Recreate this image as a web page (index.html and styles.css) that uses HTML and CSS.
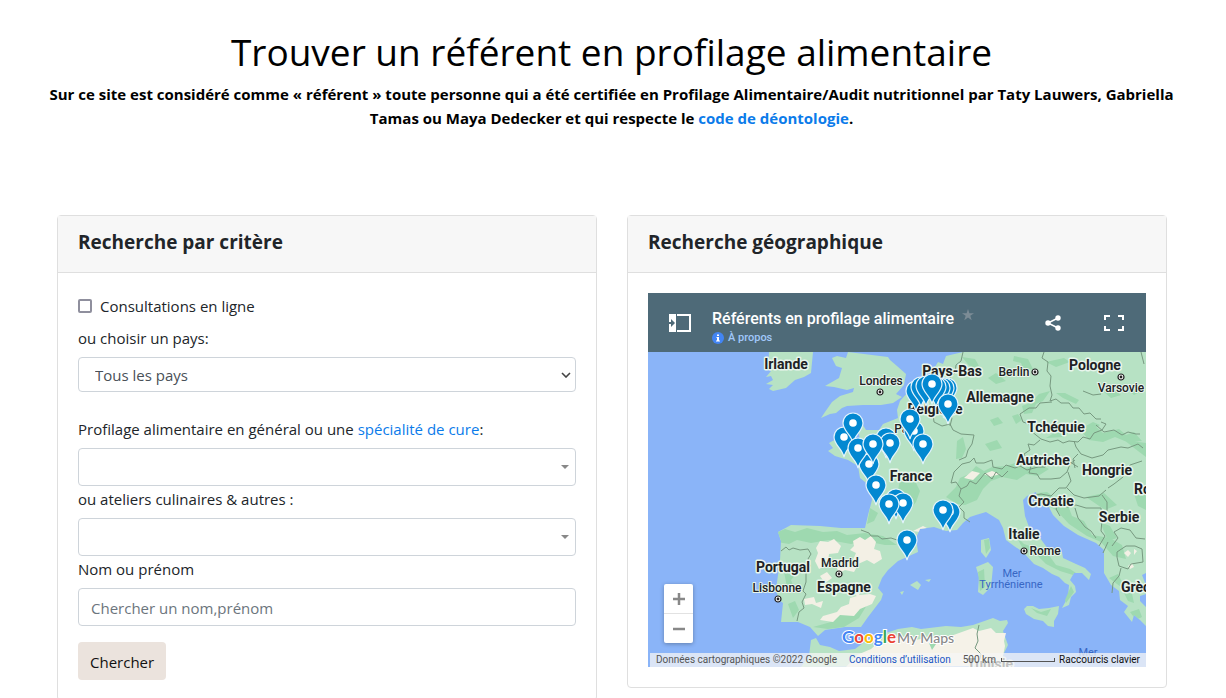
FILE: index.html
```html
<!DOCTYPE html>
<html lang="fr">
<head>
<meta charset="utf-8">
<title>Trouver un référent en profilage alimentaire</title>
<link rel="stylesheet" href="styles.css">
</head>
<body>
<main class="container">
  <header class="intro">
    <h1 class="intro-title">Trouver un référent en profilage alimentaire</h1>
    <p class="intro-text">Sur ce site est considéré comme « référent » toute personne qui a été certifiée en Profilage Alimentaire/Audit nutritionnel par Taty Lauwers, Gabriella Tamas ou Maya Dedecker et qui respecte le <a class="link" href="#">code de déontologie</a>.</p>
  </header>
  <div class="columns">
    <section class="card">
      <h2 class="card-header">Recherche par critère</h2>
      <form class="card-body form">
        <label class="check"><input class="checkbox" type="checkbox">Consultations en ligne</label>
        <label class="label" for="country">ou choisir un pays:</label>
        <div class="select-wrap country">
          <select class="control country-select" id="country"><option>Tous les pays</option></select>
          <svg class="caret" width="10" height="6" viewBox="0 0 10 6"><path d="M1 1l4 4 4-4" fill="none" stroke="#444" stroke-width="1.6"/></svg>
        </div>
        <div class="label"><label for="speciality">Profilage alimentaire en général ou une</label> <a class="link" href="#">spécialité de cure</a>:</div>
        <div class="select-wrap">
          <select class="control" id="speciality"><option></option></select>
          <svg class="caret" width="8" height="4" viewBox="0 0 8 4"><path d="M0 0h8l-4 4z" fill="#888"/></svg>
        </div>
        <label class="label" for="workshop">ou ateliers culinaires &amp; autres :</label>
        <div class="select-wrap">
          <select class="control" id="workshop"><option></option></select>
          <svg class="caret" width="8" height="4" viewBox="0 0 8 4"><path d="M0 0h8l-4 4z" fill="#888"/></svg>
        </div>
        <label class="label" for="name">Nom ou prénom</label>
        <input class="control" id="name" type="text" placeholder="Chercher un nom,prénom">
        <button class="submit" type="button">Chercher</button>
      </form>
    </section>
    <section class="card">
      <h2 class="card-header">Recherche géographique</h2>
      <div class="card-body">
        <div class="map">
          <div class="map-header">
            <button class="map-button" type="button" aria-label="Légende">
              <svg width="22" height="18" viewBox="0 0 22 18"><path d="M0 0h7v18H0z" fill="#fff"/><path d="M8 1h13v16H8" fill="none" stroke="#fff" stroke-width="2"/><path d="M0 8h2V5l4 4-4 4v-3H0z" fill="#4e6a78"/></svg>
            </button>
            <div class="map-heading">
              <div class="map-title-row">
                <h3 class="map-title">Référents en profilage alimentaire</h3>
                <svg width="12" height="12" viewBox="0 0 12 12"><path d="M6 0l1.4 4.2H12L8.300 6.800 9.700 11.300 6 8.500 2.300 11.300 3.700 6.800 0 4.200h4.600z" fill="#7c8c96"/></svg>
              </div>
              <a class="map-about" href="#"><svg width="12" height="12" viewBox="0 0 12 12"><circle cx="6" cy="6" r="6" fill="#4285f4"/><path d="M5 2.500h2v1.500H5zM4.500 5H7v3.500h1v1H4v-1h1V6h-.5z" fill="#fff"/></svg>À propos</a>
            </div>
            <button class="map-button share" type="button" aria-label="Partager">
              <svg width="16" height="16" viewBox="0 0 16 16"><path d="M13 3L3 8l10 5" fill="none" stroke="#fff" stroke-width="1.500"/><g fill="#fff"><circle cx="13" cy="3" r="2.700"/><circle cx="3" cy="8" r="2.700"/><circle cx="13" cy="13" r="2.700"/></g></svg>
            </button>
            <button class="map-button" type="button" aria-label="Plein écran">
              <svg width="20" height="16" viewBox="0 0 20 16"><path d="M1 5V1h5M14 1h5v4M19 11v4h-5M6 15H1v-4" fill="none" stroke="#fff" stroke-width="2"/></svg>
            </button>
          </div>
          <div class="map-canvas">
            <svg class="map-drawing" viewBox="648 352 498 315" role="img" aria-label="Carte des référents en Europe">
              <defs>
                <g id="pin"><path d="M0 20C-2 11-10 8-10 0a10 10 0 0 1 20 0C10 8 2 11 0 20z" fill="#0288d1" stroke="#e4f4fc" stroke-width="1.200"/><circle r="3.800" fill="#fff"/></g>
                <g id="city"><circle r="3" fill="#fff" stroke="#222" stroke-width="1.200"/><circle r="1.400" fill="#222"/></g>
                <clipPath id="land"><path d="M963 352L946 356 943 364 938 362 930 375 918 384 908 392 900 401 897 410 898 418 883 424 879 430 866 430 861 422 855 424 859 434 860 442 848 439 838 438 829 443 833 448 828 451 835 456 848 460 858 466 860 478 870 486 872 500 868 515 865 528 841 528 820 526 791 525 778 532 781 541 780 560 776 590 779 600 783 603 781 622 798 622 810 627 818 636 825 630 845 627 861 627 868 617 881 600 883 594 878 588 882 578 888 570 898 561 918 552 916 538 920 529 934 527 946 531 957 530 963 523 970 517 976 515 986 512 999 520 1003 528 1006 540 1014 546 1023 552 1034 564 1043 568 1052 574 1059 577 1065 583 1069 585 1068 597 1062 608 1069 605 1071 597 1076 592 1075 586 1070 580 1074 573 1082 573 1089 580 1091 574 1085 568 1076 564 1063 558 1062 552 1048 549 1040 538 1029 527 1025 516 1023 500 1027 496 1036 492 1039 503 1045 499 1053 515 1064 526 1078 535 1096 543 1104 550 1104 573 1111 585 1119 591 1120 600 1128 606 1124 612 1132 622 1134 615 1140 620 1146 626V352z"/></clipPath>
              </defs>
              <path d="M648 352h498v315H648z" fill="#8ab4f8"/>
              <g fill="#b7e2c4">
                <path d="M769 352h44l-2 21-7 4-9 3-9 8-13 3-4-2 4-4-7-1 7-4-2-4-5 1 5-6-3-3z"/>
                <path d="M848 352l-2 6-9-2-5 2 4 8 6 2-3 10-14 8 9 1 13 3 7-2-1 4-13 4-8 6-7 10-4 6 9-4 6-1 6-5 5-2 16-1h18l12-2 9-6-6-3 8-9 2-11-9-8-7-6-2-3z"/>
                <g clip-path="url(#land)">
                  <path d="M648 352h498v315H648z"/>
                  <g fill="#9ed9b0">
                    <path d="M778 532l7-3 10 3 12-4 16 4 14-1 10 4 18-2 18 3 14 9-12 0-20-4-14 3-22-4-18 3-14-3-8 4-12-2z"/>
                    <path d="M784 572l7-3 5 5-5 6 3 8-6 4zM788 604l7-3 4 9-6 8zM813 627l18-5 10-8 12-3 14-6-8 13-15 9-16 2z"/>
                    <path d="M900 480l9-4 7 7 4 8-4 11-7 9-8-5 4-12-7-4zM870 508l8 5-4 8-7 3z"/>
                    <path d="M946 497l10-10 4-9 9-4 7-8 8 5 8-4 14-1 9-3 10 5 15-4 9 5-11 7-12-2-9 6-15-3-11 4-8 8-6 11-12 5-8-1z"/>
                    <path d="M957 441l6-4 3 12-4 9-6 1zM962 357l13 2 4 7-8 2zM988 378l8-5 10 8-10 3zM1014 356l14 3 5 10-9 2-3-8-8-2zM1046 362l18-4 6 4-14 5z"/>
                    <path d="M1022 406l8-3 9-9 11-3-7 10-7 3-4 9-8 1zM1056 393l9 0 14 7-3 4-13-6zM1046 438l16-10 12 1-10 8zM1072 424l12 3 9-5 7 3-15 10z"/>
                    <path d="M1080 430l14-5 9 8 16-4 7 6 8-3 8 9-15 1-12-5-12 5-14-2zM1124 440l22 3v14l-8-6z"/>
                    <path d="M1030 494l17-2 12 9 8 2 5 13 12 5 8 14 18 3 12 7 4 14-13-3-12-14-14-6-18-12-13-14-12-6z"/>
                    <path d="M1016 536l8 8 9 3 15 7 8 11 14 4 12 8-9-2-13-4-14-7-13-13-10-2z"/>
                    <path d="M1086 497l18-4 13 12-12 5zM1100 522l10 4 7 12-9 3zM1109 578l9-4 5 10 8 5 3 14-6-2-7-14zM1130 612l9-3 3 8-6 3zM1134 494l12-4v20l-8-4z"/>
                    <path d="M1104 392l8-3 9 6-10 3zM1126 388l10-5 6 8-8 4zM1012 416l6-2 4 6-6 4zM990 420l8-3 5 6-9 3zM985 444l12-4 5 8-12 3z"/>
                  </g>
                  <g fill="#f3f0e5">
                    <path d="M820 541l8 1 6-3 7 7-3 7-9 1-1 8 10-3 6 4-8 5-9-3-8 4-4-8 3-8-2-5z"/>
                    <path d="M853 541l7-4 5 3 6-4 5 6-2 7 6 2 2 8-8 5-7-4-9 4-6-2 4-9-6-3 4-4z"/>
                    <path d="M836 566l12-4 10 3-4 7-9-2-6 3zM846 586l11-4 5 7-3 6 11-1 6 2-4 8-12 5-6 7-14-1-7 7-13-2 3-4 14-4 4-5 8-3 1-6 7-2-8-5zM804 599l10-2 2 6 7-2-2 7-9-4-7 1zM820 576l7-4 5 6-7 5z"/>
                    <path d="M964 478l8-7 8 2-7 7zM984 474l8-3 8 3-10 3zM913 531l10-5 4 2-7 4z"/>
                    <path d="M1124 553l4-3 3 3-3 4zM1134 549l3 2-3 4zM1128 566l4-3 2 4-4 2z"/>
                  </g>
                </g>
                <path d="M981 540l8-2 2 12-5 8-5-6z"/>
                <path d="M976 567l12-5 5 5-2 20-8 8-5-3 1-15z"/>
                <path d="M1024 609l3-3 6 0 6 3 10-1 10-2-1 8-4 7 0 6-6-1-5-5-9-2-8-5z"/>
                <path d="M910 585l7-4 4 4-3 5zM925 580l6-1-2 3zM900 592l4-1-2 4z"/>
                <path d="M801 667l8-11 2-16 5-2 4 7 10 2 9 4 16-2 12-9 16-6 15-5 14-2 9 2 25-3 15 1 12-2 20-7 7 3 7-1 1 3-5 8 5 14-5 10 3 10z"/>
              </g>
              <path d="M846 667l11-12 14-6 10-9 21-3 12 3 14-2 20-1 25-9 6 3 12-3 5 5 10 0-2 8 1 5-2 10 3 10z" fill="#f5f2e8"/>
              <path d="M984 540l5-1 1 9-4 6zM978 572l6-3 1 18-5 4zM1031 608l10 4 10-3-4 7-10-3zM1065 600l6-14 3 6-8 11zM871 642l10-3 4 4-9 4zM929 643l7 1-4 6z" fill="#9ed9b0"/>
              <path d="M1142 575l4-2v12zM1140 596l6-2v13l-6-6z" fill="#8ab4f8"/>
              <g fill="none" stroke="#779980" stroke-width="1" stroke-linejoin="round">
                <path d="M781 551l5-4 3 3 4-2 7 2 8-1 3 5-3 5 2 7-4 6 0 10-3 9 3 3-4 8 2 6-5 4-2 9M861 530l8 3 2 3 7 0 4 3 9-1 6 2 6-1 7 3"/>
                <path d="M926 410l7 4 1 8 8 4 8-2 3 6 8 4 13 1-2 9-4 6-2 7-7 3"/>
                <path d="M963 352l-2 9-5 4-1 8-5 4 1 6-6 4 0 8 4 6-2 11 5 6-2 8M1044 352l-2 6 6 4-1 9 4 5-1 10 2 9-2 6 6-2 5 4 8 0 4 5 6 0 5 6 6-1 6 6 5 0"/>
                <path d="M1052 402l-12 1-4 5-7 0-9 6 3 8 6 2 2 7 10 8 9 3 8-2 5 3 6-2 9 1 5-5 7 2 4-6 8-3 4-6-5-2M1040 440l-6 5-6-1 2 6-6 4 4 7-2 5M1074 441l2 6 5 7 11 4 11-3 5-5 13-3 7 1 10-4 5 4M1096 425l8 7 10-2 8 5 6-3 8 2 4 0"/>
                <path d="M951 483l3-11 8-8 8-2 4-4 2 5 8 0 8-3 1 7 9 2 4-4 9 3 5-2 7 4 11-3 7 0 3-6 9-1 7 4 6-2 8 5M951 483l5-1 5 7 6-3 3-5 6 3 5-6 4-5 7 6 4-7 6 5 6-6M961 489l-2 7 5 6-5 5 5 5 0 6 6 4M1031 466l-2 7 8 1 3 5 11 0 9-1 7-6 3-8 5-4M1068 472l3 9-5 7-7 0-8 8-10-2-9 2M1067 488l7 7 10 3 15-2 7-6M1078 454l-5 5 2 9"/>
                <path d="M1108 488l6-4 9-7 7-12 12-4M1060 516l-4-7 3-6 8 4 9-2 10 3 15 0 1 12-1 11 4 5-6 10M1075 508l3 10 7 9 6 4 5 7M1112 546l6-8-4-6 7-4 9 2 6 8 9 1M1103 553l5-11M1117 552l9-6 9 0 7 3 1 13-12 2-3 5-9-3-2-9zM1121 568l-2 8-6 7-1 10M1102 495l5 7 0 9-5 6"/>
                <path d="M979 625l-2 9 1 7-3 7 6 6-3 13M1083 391l10 4 8-1M1141 352l3 12"/>
              </g>
              <g class="sea-label"><text x="1012" y="577">Mer</text><text x="1011" y="588">Tyrrhénienne</text><text x="1088" y="656">Mer</text></g>
              <g class="country-label">
                <text x="786" y="369">Irlande</text><text x="952" y="376">Pays-Bas</text><text x="1095" y="370">Pologne</text>
                <text x="1000" y="402">Allemagne</text><text x="935" y="414">Belgique</text><text x="1056" y="432">Tchéquie</text>
                <text x="1043" y="465">Autriche</text><text x="1107" y="475">Hongrie</text><text x="911" y="481">France</text>
                <text x="1051" y="506">Croatie</text><text x="1119" y="522">Serbie</text><text x="1024" y="539">Italie</text>
                <text x="783" y="572">Portugal</text><text x="844" y="592">Espagne</text><text x="990" y="669">Tunisie</text>
                <text class="start" x="1134" y="494">Roumanie</text><text class="start" x="1121" y="592">Grèce</text>
              </g>
              <g class="city-label">
                <text x="881" y="385">Londres</text><text x="1014" y="376">Berlin</text><text x="1121" y="392">Varsovie</text><text x="908" y="433">Paris</text>
                <text x="840" y="567">Madrid</text><text x="777" y="592">Lisbonne</text><text x="1045" y="555">Rome</text>
              </g>
              <use href="#city" x="880" y="392"/><use href="#city" x="1035" y="372"/><use href="#city" x="1121" y="377"/><use href="#city" x="839" y="574"/><use href="#city" x="778" y="599"/><use href="#city" x="1024" y="551"/>
              <use href="#pin" x="916" y="391"/><use href="#pin" x="947" y="388"/><use href="#pin" x="944" y="388"/><use href="#pin" x="940" y="388"/><use href="#pin" x="921" y="387"/><use href="#pin" x="936" y="387"/><use href="#pin" x="926" y="386"/><use href="#pin" x="932" y="384"/><use href="#pin" x="948" y="404"/>
              <use href="#pin" x="914" y="431"/><use href="#pin" x="910" y="419"/><use href="#pin" x="923" y="444"/>
              <use href="#pin" x="844" y="437"/><use href="#pin" x="853" y="423"/><use href="#pin" x="869" y="464"/><use href="#pin" x="886" y="438"/><use href="#pin" x="858" y="448"/><use href="#pin" x="890" y="443"/><use href="#pin" x="873" y="444"/><use href="#pin" x="876" y="485"/>
              <use href="#pin" x="896" y="499"/><use href="#pin" x="903" y="503"/><use href="#pin" x="889" y="504"/><use href="#pin" x="950" y="512"/><use href="#pin" x="943" y="510"/><use href="#pin" x="907" y="540"/>
              <text class="brand" x="842" y="643"><tspan fill="#4285f4">G</tspan><tspan fill="#ea4335">o</tspan><tspan fill="#fbbc04">o</tspan><tspan fill="#4285f4">g</tspan><tspan fill="#34a853">l</tspan><tspan fill="#ea4335">e</tspan></text>
              <text class="brand-product" x="897" y="643">My Maps</text>
            </svg>
            <div class="zoom"><button class="zoom-button" type="button" aria-label="Zoom avant"><svg width="12" height="12" viewBox="0 0 12 12"><path d="M0 6h12M6 0v12" stroke="#888" stroke-width="2.500"/></svg></button><button class="zoom-button" type="button" aria-label="Zoom arrière"><svg width="12" height="12" viewBox="0 0 12 12"><path d="M0 6h12" stroke="#888" stroke-width="2.500"/></svg></button></div>
            <div class="map-footer">
              <span class="credits">Données cartographiques ©2022 Google</span>
              <a class="terms" href="#">Conditions d’utilisation</a>
              <span class="scale">500 km<span class="scale-bar"></span></span>
              <button class="shortcuts" type="button">Raccourcis clavier</button>
            </div>
          </div>
        </div>
      </div>
    </section>
  </div>
</main>
</body>
</html>
```
FILE: styles.css
```css
* { box-sizing: border-box; }
html { overflow: hidden; }
body { margin: 0; background: #fff; color: #212529; font: 16px/24px "Open Sans", "Noto Sans", sans-serif; }
h1, h2, h3, p { margin: 0; }
button, input, select { font: inherit; }
svg { display: block; }
.container { max-width: 1140px; margin: 0 auto; padding: 28px 0 0; }
.intro { padding-right: 3px; color: #000; text-align: center; }
.intro-title { font-size: 37px; line-height: 48px; font-weight: 400; margin-bottom: 6px; }
.intro-text { font-size: 15px; font-weight: 700; }
.link { color: #0b7bea; text-decoration: none; }
.columns { display: grid; grid-template-columns: 1fr 1fr; gap: 30px; align-items: start; padding: 85px 16px 0 14px; }
.card { border: 1px solid #dfdfdf; border-radius: 4px; }
.card-header { padding: 14px 20px 18px; background: #f7f7f7; border-bottom: 1px solid #dfdfdf; font-size: 19px; line-height: 24px; font-weight: 700; }
.card-body { padding: 20px; }
.form { display: flex; flex-direction: column; font-size: 15px; }
.check { display: flex; align-items: center; gap: 8px; line-height: 26px; }
.checkbox { appearance: none; width: 14px; height: 14px; margin: 0; border: 2px solid #8f8f9d; border-radius: 2px; background: #fff; }
.label { display: block; margin-bottom: 7px; }
.check + .label { margin-top: 7px; }
.select-wrap { position: relative; }
.control { display: block; width: 100%; height: 38px; padding: 2px 12px 0; border: 1px solid #ced4da; border-radius: 4px; background: #fff; color: #495057; appearance: none; }
.country { margin-bottom: 25px; }
.country-select { height: 35px; padding: 0 16px; }
.control::placeholder { color: #6c757d; opacity: 1; }
.select-wrap + .label { margin-top: 1px; }
.country + .label { margin-top: 0; }
.caret { position: absolute; right: 7px; top: 50%; transform: translateY(-50%); pointer-events: none; }
.country .caret { right: 5px; }
.submit { align-self: flex-start; height: 38px; margin-top: 16px; padding: 2px 12px 0; border: 0; border-radius: 4px; background: #ebe3dd; color: #111; }
.map { font-family: Roboto, sans-serif; }
.map-header { display: flex; align-items: center; height: 59px; padding: 0 22px 0 21px; background: #4e6a78; color: #fff; }
.map-button { padding: 0; border: 0; background: none; }
.map-heading { flex: 1; margin-left: 21px; padding-top: 10px; }
.map-title-row { display: flex; align-items: flex-start; gap: 8px; }
.map-title { font-size: 16px; line-height: 20px; font-weight: 500; }
.map-about { display: flex; align-items: center; gap: 4px; color: #a1c8fa; font-size: 11px; line-height: 18px; font-weight: 500; text-decoration: none; }
.share { margin-right: 43px; }
.map-canvas { position: relative; overflow: hidden; }
.map-drawing { width: 100%; height: auto; }
.country-label, .city-label { paint-order: stroke; stroke: #e8f5ec; stroke-linejoin: round; fill: #202124; text-anchor: middle; }
.country-label { stroke-width: 3px; font-size: 14px; font-weight: 700; }
.country-label .start { text-anchor: start; }
.city-label { stroke-width: 2px; font-size: 12px; font-weight: 500; }
.sea-label { fill: #3767c5; font-size: 11px; text-anchor: middle; }
.brand { paint-order: stroke; stroke: #fff; stroke-width: 2px; font: 700 17px Lato, sans-serif; }
.brand-product { paint-order: stroke; stroke: #fff; stroke-width: 2px; fill: #888; font: 500 14px Lato, sans-serif; }
.zoom { position: absolute; left: 16px; bottom: 24px; width: 29px; border-radius: 2px; background: #fff; box-shadow: 0 1px 4px rgba(0, 0, 0, .3); }
.zoom-button { display: flex; align-items: center; justify-content: center; width: 100%; height: 29px; padding: 0; border: 0; background: none; }
.zoom-button + .zoom-button { height: 30px; border-top: 1px solid #e2e2e2; }
.map-footer { position: absolute; left: 2px; right: 0; bottom: 0; display: flex; align-items: center; height: 14px; padding: 0 6px; background: rgba(245, 245, 245, .75); color: #555; font-size: 10px; line-height: 14px; white-space: nowrap; }
.terms { margin-left: 12px; color: #1a56c4; text-decoration: none; }
.scale { display: flex; flex: 1; align-items: center; gap: 5px; margin-left: 12px; }
.scale-bar { flex: 1; max-width: 72px; height: 4px; border: 1px solid #555; border-top: 0; }
.shortcuts { margin-left: 4px; padding: 0; border: 0; background: none; color: #111; }
```
